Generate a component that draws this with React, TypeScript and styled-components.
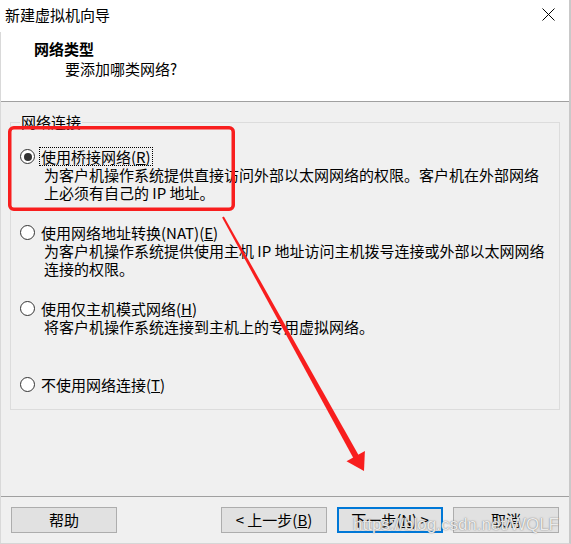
import React from "react";
import styled, { createGlobalStyle } from "styled-components";

const GlobalStyle = createGlobalStyle`
  html, body { margin: 0; padding: 0; background: #ffffff; }
  body { font-family: "Noto Sans CJK SC", "Noto Sans", sans-serif; }
`;

const Window = styled.div`
  position: relative;
  width: 571px;
  height: 544px;
  box-sizing: border-box;
  display: flex;
  flex-direction: column;
  background: #f0f0f0;
  border-right: 2px solid #c9c9c9;
  border-bottom: 1px solid #d6d6d6;
  font-family: "Noto Sans CJK SC", "Noto Sans", sans-serif;
  font-size: 15px;
  color: #000;
  overflow: hidden;
`;

const TitleBar = styled.div`
  height: 32px;
  flex: none;
  background: #ffffff;
  display: flex;
  justify-content: space-between;
  align-items: flex-start;
  padding: 0 14px 0 5px;
`;

const TitleText = styled.div`
  line-height: 29px;
`;

const CloseIcon = styled.svg`
  margin-top: 8px;
  display: block;
`;

const Content = styled.div`
  flex: 1;
  display: flex;
  flex-direction: column;
  border-left: 1px solid #d9d9d9;
`;

const Header = styled.div`
  height: 70px;
  box-sizing: border-box;
  background: #ffffff;
  border-bottom: 1px solid #a0a0a0;
  padding-top: 7px;
`;

const HeaderTitle = styled.div`
  font-weight: bold;
  line-height: 20px;
  padding-left: 33px;
`;

const HeaderSub = styled.div`
  line-height: 20px;
  padding-left: 64px;
`;

const Body = styled.div`
  flex: 1;
  padding: 11px 9px 0 9px;
`;

const GroupBox = styled.fieldset`
  margin: 0;
  padding: 16px 0 15px 0;
  border: 1px solid #dcdcdc;
  min-width: 0;
`;

const Legend = styled.legend`
  margin-left: 9px;
  padding: 0 1px;
  line-height: 18px;
`;

const Option = styled.div`
  height: 76px;
  &:last-child { height: auto; }
`;

const OptionRow = styled.div`
  display: flex;
  align-items: center;
  height: 19px;
  padding-left: 9px;
`;

const Radio = styled.span<{ $checked?: boolean }>`
  position: relative;
  width: 15px;
  height: 15px;
  box-sizing: border-box;
  border: 1px solid #333333;
  border-radius: 50%;
  background: #ffffff;
  flex: none;
  &::after {
    content: "";
    display: ${(p) => (p.$checked ? "block" : "none")};
    position: absolute;
    left: 2.5px;
    top: 2.5px;
    width: 8px;
    height: 8px;
    border-radius: 50%;
    background: #333333;
  }
`;

const Label = styled.span<{ $focused?: boolean }>`
  margin-left: 4px;
  padding: 0 1px;
  line-height: 17px;
  border: 1px dotted ${(p) => (p.$focused ? "#000" : "transparent")};
  white-space: nowrap;
`;

const Desc = styled.div`
  padding-left: 33px;
  line-height: 18px;
  white-space: nowrap;
`;

const Footer = styled.div`
  flex: none;
  display: flex;
  align-items: flex-start;
  border-top: 1px solid #a0a0a0;
  padding: 10px;
`;

const ButtonGroup = styled.div`
  margin-left: auto;
  display: flex;
  gap: 10px;
`;

const Button = styled.button<{ $primary?: boolean }>`
  width: 106px;
  height: 26px;
  box-sizing: border-box;
  margin: 0;
  padding: 0;
  background: #e1e1e1;
  border: ${(p) => (p.$primary ? "2px solid #0078d7" : "1px solid #adadad")};
  font-family: "Noto Sans CJK SC", "Noto Sans", sans-serif;
  font-size: 15px;
  color: #000;
  line-height: 20px;
  white-space: pre;
`;

const Overlay = styled.svg`
  position: absolute;
  left: 0;
  top: 0;
  pointer-events: none;
`;

const Watermark = styled.div`
  position: absolute;
  left: 353px;
  top: 515px;
  font-family: "Liberation Sans", Arial, sans-serif;
  font-size: 17px;
  line-height: 20px;
  color: rgba(255, 255, 255, 0.85);
  text-shadow: 0 0 1px rgba(90, 90, 90, 0.75), 0 0 2px rgba(140, 140, 140, 0.5);
  pointer-events: none;
  white-space: nowrap;
`;

export default function App() {
  return (
    <>
      <GlobalStyle />
      <Window>
        <TitleBar>
          <TitleText>新建虚拟机向导</TitleText>
          <CloseIcon width="13" height="13" viewBox="0 0 13 13">
            <path d="M0.5 0.5 L12.5 12.5 M12.5 0.5 L0.5 12.5" stroke="#000" strokeWidth="1" fill="none" />
          </CloseIcon>
        </TitleBar>
        <Content>
          <Header>
            <HeaderTitle>网络类型</HeaderTitle>
            <HeaderSub>要添加哪类网络?</HeaderSub>
          </Header>
          <Body>
            <GroupBox>
              <Legend>网络连接</Legend>
              <Option>
                <OptionRow>
                  <Radio $checked />
                  <Label $focused>
                    使用桥接网络(<u>R</u>)
                  </Label>
                </OptionRow>
                <Desc>
                  为客户机操作系统提供直接访问外部以太网网络的权限。客户机在外部网络
                  <br />
                  上必须有自己的 IP 地址。
                </Desc>
              </Option>
              <Option>
                <OptionRow>
                  <Radio />
                  <Label>
                    使用网络地址转换(NAT)(<u>E</u>)
                  </Label>
                </OptionRow>
                <Desc>
                  为客户机操作系统提供使用主机 IP 地址访问主机拨号连接或外部以太网网络
                  <br />
                  连接的权限。
                </Desc>
              </Option>
              <Option>
                <OptionRow>
                  <Radio />
                  <Label>
                    使用仅主机模式网络(<u>H</u>)
                  </Label>
                </OptionRow>
                <Desc>将客户机操作系统连接到主机上的专用虚拟网络。</Desc>
              </Option>
              <Option>
                <OptionRow>
                  <Radio />
                  <Label>
                    不使用网络连接(<u>T</u>)
                  </Label>
                </OptionRow>
              </Option>
            </GroupBox>
          </Body>
          <Footer>
            <Button>帮助</Button>
            <ButtonGroup>
              <Button>
                {"< 上一步("}<u>B</u>)
              </Button>
              <Button $primary>
                下一步(<u>N</u>){" >"}
              </Button>
              <Button>取消</Button>
            </ButtonGroup>
          </Footer>
        </Content>
        <Overlay width="571" height="544" viewBox="0 0 571 544">
          <rect x="9.75" y="127.75" width="223.5" height="81.5" rx="4" ry="4" fill="none" stroke="#f81e1e" strokeWidth="3.5" />
          <polygon points="223.9,216.5 222.1,217.5 353.6,458.5 358.8,455.5" fill="#f81e1e" />
          <polygon points="364.9,451.0 346.5,461.2 364,471" fill="#f81e1e" />
        </Overlay>
        <Watermark>https://blog.csdn.net/WQLF</Watermark>
      </Window>
    </>
  );
}
